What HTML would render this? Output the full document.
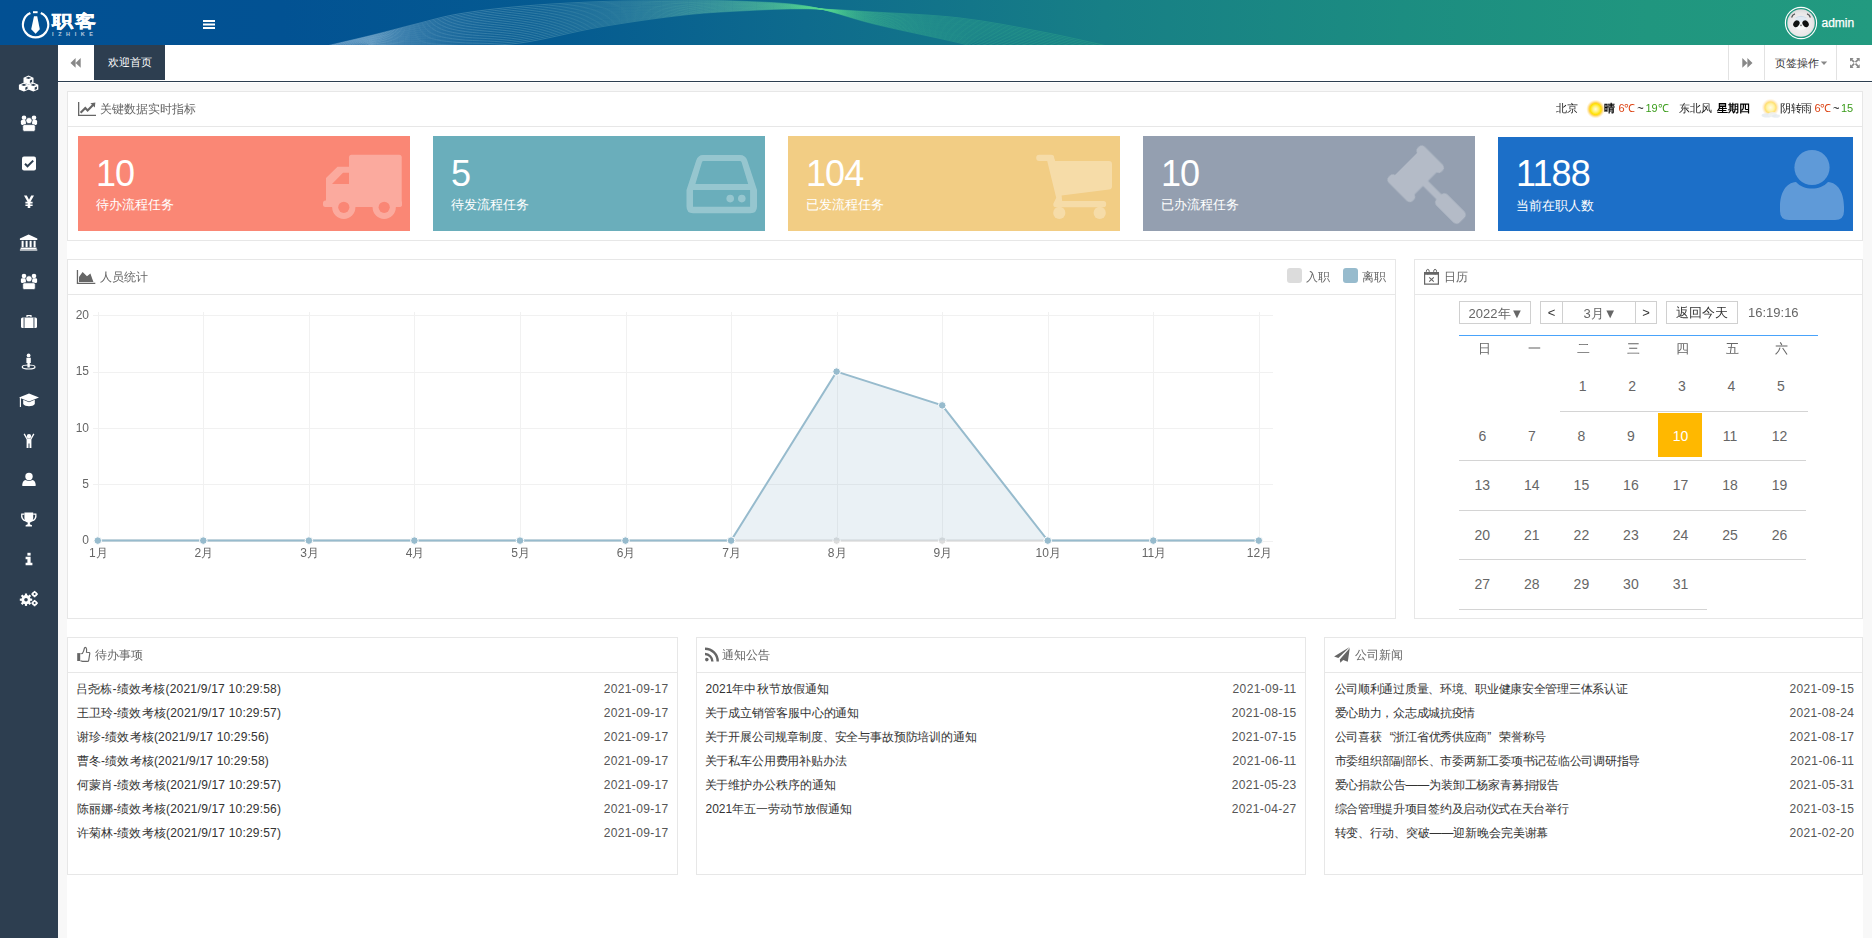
<!DOCTYPE html>
<html><head><meta charset="utf-8">
<style>
*{margin:0;padding:0;box-sizing:border-box}
html,body{width:1872px;height:938px;overflow:hidden}
body{position:relative;background:#f8f8f8;font-family:"Liberation Sans",sans-serif;font-size:12px;color:#333}
.abs{position:absolute}
#hdr{left:0;top:0;width:1872px;height:45px;background:linear-gradient(90deg,#025093 0%,#025293 15%,#055b91 30%,#0e6b8d 43%,#177f86 59%,#1c8d81 75%,#20967f 88%,#229a80 100%);overflow:hidden}
#side{left:0;top:45px;width:58px;height:893px;background:#2d3e50}
#tabbar{left:58px;top:45px;width:1814px;height:38px;background:#fff}
#tabline{left:58px;top:81px;width:1814px;height:1px;background:#2d3e50}
#wrap{left:67px;top:91px;width:1796px;height:847px;background:#fff}
.panel{position:absolute;background:#fff;border:1px solid #e7e7e7}
.ptitle{position:absolute;left:0;top:0;right:0;height:35px;border-bottom:1px solid #e7e7e7;color:#666;font-size:12px;line-height:35px}
.card{position:absolute;top:136px;height:95px;color:#fff}
.card .num{position:absolute;left:18px;top:18px;font-size:36px;line-height:40px;letter-spacing:-0.9px}
.card .lbl{position:absolute;left:18px;top:59px;font-size:13px;line-height:20px}
.card svg{position:absolute}
.li{position:absolute;left:9px;right:9px;height:24px;line-height:24px;font-size:12px;color:#333}
.li span{position:absolute;right:0;top:0;color:#555}
</style></head><body>
<div id="hdr" class="abs">
<svg width="1872" height="45" style="position:absolute;left:0;top:0">
<defs><linearGradient id="rg" gradientUnits="userSpaceOnUse" x1="320" y1="0" x2="1130" y2="0">
<stop offset="0" stop-color="#d8ecff" stop-opacity="0.45"/>
<stop offset="0.35" stop-color="#a8dcd0" stop-opacity="0.32"/>
<stop offset="0.6" stop-color="#55d890" stop-opacity="0.42"/>
<stop offset="1" stop-color="#40c888" stop-opacity="0.35"/>
</linearGradient></defs>
<g fill="none" stroke="url(#rg)" stroke-width="0.7">
<path d="M318.0,48.0 C327.2,45.8 356.7,39.0 373.0,35.0 C389.3,31.0 401.7,27.5 416.0,24.0 C430.3,20.5 441.7,16.8 459.0,13.9 C476.3,11.0 496.5,8.5 520.0,6.4 C543.5,4.3 573.3,2.6 600.0,1.6 C626.7,0.6 656.7,0.7 680.0,0.6 C703.3,0.5 718.7,0.2 740.0,1.2 C761.3,2.1 785.7,2.5 808.0,6.3 C830.3,10.1 848.7,17.9 874.0,24.0 C899.3,30.1 944.4,39.2 960.0,43.0 C975.6,46.8 965.0,45.3 967.5,46.5 C970.0,47.7 973.8,49.4 975.0,50.0"/>
<path d="M320.9,48.0 C329.5,45.9 357.1,39.3 373.0,35.5 C388.9,31.7 401.7,28.4 416.0,25.0 C430.3,21.7 441.7,18.2 459.0,15.4 C476.3,12.6 496.5,10.2 520.0,8.1 C543.5,6.0 573.3,3.9 600.0,2.8 C626.7,1.7 656.7,1.5 680.0,1.3 C703.3,1.1 718.7,0.8 740.0,1.7 C761.3,2.5 785.7,2.8 808.0,6.4 C830.3,10.0 848.7,17.5 874.0,23.4 C899.3,29.3 943.8,38.1 960.0,41.8 C976.2,45.5 967.4,44.4 971.1,45.8 C974.8,47.2 980.3,49.3 982.1,50.0"/>
<path d="M323.7,48.0 C331.9,46.0 357.6,39.7 373.0,36.0 C388.4,32.4 401.7,29.3 416.0,26.1 C430.3,22.9 441.7,19.6 459.0,16.9 C476.3,14.2 496.5,12.0 520.0,9.9 C543.5,7.7 573.3,5.3 600.0,4.0 C626.7,2.7 656.7,2.3 680.0,2.0 C703.3,1.7 718.7,1.4 740.0,2.1 C761.3,2.9 785.7,3.1 808.0,6.5 C830.3,10.0 848.7,17.2 874.0,22.9 C899.3,28.5 943.2,36.9 960.0,40.6 C976.8,44.3 969.8,43.6 974.6,45.1 C979.5,46.7 986.8,49.2 989.3,50.0"/>
<path d="M326.6,48.0 C334.3,46.1 358.1,40.0 373.0,36.6 C387.9,33.1 401.7,30.2 416.0,27.1 C430.3,24.1 441.7,21.0 459.0,18.4 C476.3,15.8 496.5,13.8 520.0,11.6 C543.5,9.4 573.3,6.7 600.0,5.2 C626.7,3.7 656.7,3.2 680.0,2.7 C703.3,2.3 718.7,1.9 740.0,2.6 C761.3,3.3 785.7,3.4 808.0,6.7 C830.3,9.9 848.7,16.8 874.0,22.3 C899.3,27.7 942.6,35.7 960.0,39.4 C977.4,43.1 972.1,42.7 978.2,44.4 C984.3,46.2 993.4,49.1 996.4,50.0"/>
<path d="M329.4,48.0 C336.7,46.2 358.6,40.4 373.0,37.1 C387.4,33.8 401.7,31.1 416.0,28.2 C430.3,25.3 441.7,22.4 459.0,19.9 C476.3,17.4 496.5,15.6 520.0,13.4 C543.5,11.1 573.3,8.1 600.0,6.4 C626.7,4.8 656.7,4.0 680.0,3.4 C703.3,2.9 718.7,2.5 740.0,3.1 C761.3,3.6 785.7,3.7 808.0,6.8 C830.3,9.9 848.7,16.5 874.0,21.7 C899.3,27.0 942.0,34.6 960.0,38.2 C978.0,41.9 974.5,41.8 981.8,43.7 C989.0,45.7 999.9,49.0 1003.6,50.0"/>
<path d="M332.3,48.0 C339.1,46.3 359.0,40.7 373.0,37.6 C387.0,34.5 401.7,31.9 416.0,29.2 C430.3,26.5 441.7,23.8 459.0,21.4 C476.3,19.1 496.5,17.4 520.0,15.1 C543.5,12.8 573.3,9.5 600.0,7.6 C626.7,5.8 656.7,4.8 680.0,4.1 C703.3,3.5 718.7,3.1 740.0,3.5 C761.3,4.0 785.7,4.0 808.0,6.9 C830.3,9.8 848.7,16.1 874.0,21.1 C899.3,26.2 941.4,33.4 960.0,37.0 C978.6,40.7 976.9,40.9 985.4,43.0 C993.8,45.2 1006.5,48.8 1010.7,50.0"/>
<path d="M335.1,48.0 C341.5,46.4 359.5,41.1 373.0,38.1 C386.5,35.2 401.7,32.8 416.0,30.3 C430.3,27.8 441.7,25.2 459.0,22.9 C476.3,20.7 496.5,19.2 520.0,16.9 C543.5,14.5 573.3,10.9 600.0,8.9 C626.7,6.9 656.7,5.7 680.0,4.9 C703.3,4.0 718.7,3.6 740.0,4.0 C761.3,4.4 785.7,4.3 808.0,7.0 C830.3,9.8 848.7,15.8 874.0,20.6 C899.3,25.4 940.8,32.2 960.0,35.9 C979.2,39.5 979.3,40.0 988.9,42.4 C998.6,44.7 1013.0,48.7 1017.9,50.0"/>
<path d="M338.0,48.0 C343.8,46.4 360.0,41.4 373.0,38.7 C386.0,35.9 401.7,33.7 416.0,31.3 C430.3,29.0 441.7,26.6 459.0,24.4 C476.3,22.3 496.5,21.0 520.0,18.6 C543.5,16.2 573.3,12.2 600.0,10.1 C626.7,7.9 656.7,6.5 680.0,5.6 C703.3,4.6 718.7,4.2 740.0,4.5 C761.3,4.7 785.7,4.5 808.0,7.1 C830.3,9.7 848.7,15.4 874.0,20.0 C899.3,24.6 940.2,31.1 960.0,34.7 C979.8,38.3 981.7,39.1 992.5,41.7 C1003.3,44.2 1019.6,48.6 1025.0,50.0"/>
<path d="M340.9,48.0 C346.2,46.5 360.5,41.8 373.0,39.2 C385.5,36.6 401.7,34.6 416.0,32.4 C430.3,30.2 441.7,27.9 459.0,25.9 C476.3,23.9 496.5,22.8 520.0,20.3 C543.5,17.9 573.3,13.6 600.0,11.3 C626.7,8.9 656.7,7.3 680.0,6.3 C703.3,5.2 718.7,4.8 740.0,4.9 C761.3,5.1 785.7,4.8 808.0,7.3 C830.3,9.7 848.7,15.1 874.0,19.4 C899.3,23.8 939.7,29.9 960.0,33.5 C980.3,37.1 984.0,38.2 996.1,41.0 C1008.1,43.7 1026.1,48.5 1032.1,50.0"/>
<path d="M343.7,48.0 C348.6,46.6 361.0,42.1 373.0,39.7 C385.0,37.3 401.7,35.5 416.0,33.4 C430.3,31.4 441.7,29.3 459.0,27.4 C476.3,25.6 496.5,24.6 520.0,22.1 C543.5,19.6 573.3,15.0 600.0,12.5 C626.7,10.0 656.7,8.2 680.0,7.0 C703.3,5.8 718.7,5.3 740.0,5.4 C761.3,5.5 785.7,5.1 808.0,7.4 C830.3,9.6 848.7,14.7 874.0,18.9 C899.3,23.0 939.1,28.7 960.0,32.3 C980.9,35.9 986.4,37.3 999.6,40.3 C1012.9,43.2 1032.7,48.4 1039.3,50.0"/>
<path d="M346.6,48.0 C351.0,46.7 361.4,42.5 373.0,40.2 C384.6,38.0 401.7,36.4 416.0,34.5 C430.3,32.6 441.7,30.7 459.0,28.9 C476.3,27.2 496.5,26.4 520.0,23.8 C543.5,21.3 573.3,16.4 600.0,13.7 C626.7,11.0 656.7,9.0 680.0,7.7 C703.3,6.4 718.7,5.9 740.0,5.9 C761.3,5.8 785.7,5.4 808.0,7.5 C830.3,9.6 848.7,14.4 874.0,18.3 C899.3,22.2 938.5,27.5 960.0,31.1 C981.5,34.6 988.8,36.4 1003.2,39.6 C1017.6,42.7 1039.2,48.3 1046.4,50.0"/>
<path d="M349.4,48.0 C353.4,46.8 361.9,42.8 373.0,40.8 C384.1,38.7 401.7,37.2 416.0,35.5 C430.3,33.8 441.7,32.1 459.0,30.5 C476.3,28.8 496.5,28.2 520.0,25.6 C543.5,23.0 573.3,17.8 600.0,14.9 C626.7,12.0 656.7,9.8 680.0,8.4 C703.3,7.0 718.7,6.5 740.0,6.3 C761.3,6.2 785.7,5.7 808.0,7.6 C830.3,9.5 848.7,14.0 874.0,17.7 C899.3,21.4 937.9,26.4 960.0,29.9 C982.1,33.4 991.2,35.6 1006.8,38.9 C1022.4,42.3 1045.8,48.2 1053.6,50.0"/>
<path d="M352.3,48.0 C355.7,46.9 362.4,43.2 373.0,41.3 C383.6,39.4 401.7,38.1 416.0,36.6 C430.3,35.0 441.7,33.5 459.0,32.0 C476.3,30.4 496.5,30.0 520.0,27.3 C543.5,24.7 573.3,19.1 600.0,16.1 C626.7,13.1 656.7,10.7 680.0,9.1 C703.3,7.6 718.7,7.0 740.0,6.8 C761.3,6.6 785.7,6.0 808.0,7.7 C830.3,9.5 848.7,13.6 874.0,17.1 C899.3,20.6 937.3,25.2 960.0,28.7 C982.7,32.2 993.6,34.7 1010.4,38.2 C1027.1,41.8 1052.3,48.0 1060.7,50.0"/>
<path d="M355.1,48.0 C358.1,47.0 362.9,43.5 373.0,41.8 C383.1,40.1 401.7,39.0 416.0,37.6 C430.3,36.2 441.7,34.9 459.0,33.5 C476.3,32.0 496.5,31.7 520.0,29.1 C543.5,26.4 573.3,20.5 600.0,17.3 C626.7,14.1 656.7,11.5 680.0,9.8 C703.3,8.1 718.7,7.6 740.0,7.3 C761.3,6.9 785.7,6.3 808.0,7.8 C830.3,9.4 848.7,13.3 874.0,16.6 C899.3,19.9 936.7,24.0 960.0,27.5 C983.3,31.0 996.0,33.8 1013.9,37.5 C1031.9,41.3 1058.9,47.9 1067.9,50.0"/>
<path d="M358.0,48.0 C360.5,47.1 363.3,43.9 373.0,42.3 C382.7,40.8 401.7,39.9 416.0,38.7 C430.3,37.4 441.7,36.3 459.0,35.0 C476.3,33.7 496.5,33.5 520.0,30.8 C543.5,28.1 573.3,21.9 600.0,18.5 C626.7,15.2 656.7,12.3 680.0,10.5 C703.3,8.7 718.7,8.2 740.0,7.7 C761.3,7.3 785.7,6.6 808.0,8.0 C830.3,9.3 848.7,12.9 874.0,16.0 C899.3,19.1 936.1,22.9 960.0,26.3 C983.9,29.8 998.3,32.9 1017.5,36.8 C1036.7,40.8 1065.4,47.8 1075.0,50.0"/>
<path d="M360.9,48.0 C362.9,47.1 363.8,44.2 373.0,42.9 C382.2,41.5 401.7,40.8 416.0,39.7 C430.3,38.6 441.7,37.7 459.0,36.5 C476.3,35.3 496.5,35.3 520.0,32.5 C543.5,29.8 573.3,23.3 600.0,19.7 C626.7,16.2 656.7,13.2 680.0,11.2 C703.3,9.3 718.7,8.7 740.0,8.2 C761.3,7.7 785.7,6.9 808.0,8.1 C830.3,9.3 848.7,12.6 874.0,15.4 C899.3,18.3 935.5,21.7 960.0,25.1 C984.5,28.6 1000.7,32.0 1021.1,36.1 C1041.4,40.3 1072.0,47.7 1082.1,50.0"/>
<path d="M363.7,48.0 C365.3,47.2 364.3,44.6 373.0,43.4 C381.7,42.2 401.7,41.7 416.0,40.8 C430.3,39.9 441.7,39.1 459.0,38.0 C476.3,36.9 496.5,37.1 520.0,34.3 C543.5,31.4 573.3,24.7 600.0,21.0 C626.7,17.2 656.7,14.0 680.0,12.0 C703.3,9.9 718.7,9.3 740.0,8.7 C761.3,8.0 785.7,7.2 808.0,8.2 C830.3,9.2 848.7,12.2 874.0,14.9 C899.3,17.5 934.9,20.5 960.0,24.0 C985.1,27.4 1003.1,31.1 1024.6,35.5 C1046.2,39.8 1078.5,47.6 1089.3,50.0"/>
<path d="M366.6,48.0 C367.6,47.3 364.8,44.9 373.0,43.9 C381.2,42.9 401.7,42.5 416.0,41.8 C430.3,41.1 441.7,40.4 459.0,39.5 C476.3,38.5 496.5,38.9 520.0,36.0 C543.5,33.1 573.3,26.1 600.0,22.2 C626.7,18.3 656.7,14.8 680.0,12.7 C703.3,10.5 718.7,9.9 740.0,9.1 C761.3,8.4 785.7,7.5 808.0,8.3 C830.3,9.2 848.7,11.9 874.0,14.3 C899.3,16.7 934.3,19.3 960.0,22.8 C985.7,26.2 1005.5,30.2 1028.2,34.8 C1051.0,39.3 1085.1,47.5 1096.4,50.0"/>
<path d="M369.4,48.0 C370.0,47.4 365.2,45.3 373.0,44.4 C380.8,43.6 401.7,43.4 416.0,42.9 C430.3,42.3 441.7,41.8 459.0,41.0 C476.3,40.1 496.5,40.7 520.0,37.8 C543.5,34.8 573.3,27.4 600.0,23.4 C626.7,19.3 656.7,15.7 680.0,13.4 C703.3,11.1 718.7,10.4 740.0,9.6 C761.3,8.8 785.7,7.8 808.0,8.4 C830.3,9.1 848.7,11.5 874.0,13.7 C899.3,15.9 933.7,18.2 960.0,21.6 C986.3,25.0 1007.9,29.3 1031.8,34.1 C1055.7,38.8 1091.6,47.3 1103.6,50.0"/>
<path d="M372.3,48.0 C372.4,47.5 365.7,45.6 373.0,45.0 C380.3,44.3 401.7,44.3 416.0,43.9 C430.3,43.5 441.7,43.2 459.0,42.5 C476.3,41.8 496.5,42.5 520.0,39.5 C543.5,36.5 573.3,28.8 600.0,24.6 C626.7,20.3 656.7,16.5 680.0,14.1 C703.3,11.7 718.7,11.0 740.0,10.1 C761.3,9.1 785.7,8.0 808.0,8.6 C830.3,9.1 848.7,11.2 874.0,13.1 C899.3,15.1 933.1,17.0 960.0,20.4 C986.9,23.8 1010.2,28.4 1035.4,33.4 C1060.5,38.3 1098.2,47.2 1110.7,50.0"/>
<path d="M375.1,48.0 C374.8,47.6 366.2,46.0 373.0,45.5 C379.8,45.0 401.7,45.2 416.0,45.0 C430.3,44.7 441.7,44.6 459.0,44.0 C476.3,43.4 496.5,44.3 520.0,41.3 C543.5,38.2 573.3,30.2 600.0,25.8 C626.7,21.4 656.7,17.3 680.0,14.8 C703.3,12.2 718.7,11.6 740.0,10.5 C761.3,9.5 785.7,8.3 808.0,8.7 C830.3,9.0 848.7,10.8 874.0,12.6 C899.3,14.3 932.5,15.8 960.0,19.2 C987.5,22.5 1012.6,27.6 1038.9,32.7 C1065.2,37.8 1104.7,47.1 1117.9,50.0"/>
<path d="M378.0,48.0 C377.2,47.7 366.7,46.3 373.0,46.0 C379.3,45.7 401.7,46.1 416.0,46.0 C430.3,45.9 441.7,46.0 459.0,45.5 C476.3,45.0 496.5,46.1 520.0,43.0 C543.5,39.9 573.3,31.6 600.0,27.0 C626.7,22.4 656.7,18.2 680.0,15.5 C703.3,12.8 718.7,12.1 740.0,11.0 C761.3,9.9 785.7,8.6 808.0,8.8 C830.3,9.0 848.7,10.5 874.0,12.0 C899.3,13.5 931.9,14.7 960.0,18.0 C988.1,21.3 1015.0,26.7 1042.5,32.0 C1070.0,37.3 1111.2,47.0 1125.0,50.0"/>
</g>
<!-- logo -->
<g fill="none" stroke="#fff" stroke-width="2.2">
<path d="M30.4,13.1 A12.7,12.7 0 1 0 40.8,13.1"/>
</g>
<rect x="33" y="11.2" width="4.6" height="2" fill="#fff"/>
<path d="M34,16.3 L37.2,16.3 L39.8,29.2 L35.6,33.8 L31.2,29.2 Z" fill="#fff"/>
<text transform="translate(51.5 27) scale(1.03 0.84)" fill="#fff" stroke="#fff" stroke-width="0.5" font-size="20" font-weight="bold" letter-spacing="2.4">职客</text>
<text x="52" y="36.2" fill="#fff" font-size="5.5" font-weight="bold" letter-spacing="4.6" opacity="0.7">IZHIKE</text>
<!-- hamburger -->
<rect x="203" y="20" width="12" height="2" fill="#fff"/>
<rect x="203" y="23.5" width="12" height="2" fill="#fff"/>
<rect x="203" y="27" width="12" height="2" fill="#fff"/>
<!-- avatar -->
<defs><radialGradient id="face" cx="0.5" cy="0.55" r="0.55"><stop offset="0" stop-color="#f6f6f6"/><stop offset="0.75" stop-color="#e9e7e8"/><stop offset="1" stop-color="#d9d9db"/></radialGradient></defs>
<circle cx="1801" cy="23" r="15.6" fill="none" stroke="#fff" stroke-width="1.1"/>
<circle cx="1801" cy="23" r="13.7" fill="url(#face)"/>
<path d="M1794.5,18.2 Q1801,13.2 1807.5,18.2 Q1801,16.4 1794.5,18.2 Z" fill="#c9daea"/>
<ellipse cx="1801" cy="19.5" rx="6.2" ry="2.2" fill="#dfe9f2"/>
<path d="M1791.6,17.5 Q1792.4,14.6 1795,13.9" fill="none" stroke="#555" stroke-width="1.3"/>
<path d="M1810.4,17.5 Q1809.6,14.6 1807,13.9" fill="none" stroke="#555" stroke-width="1.3"/>
<ellipse cx="1801" cy="26.5" rx="6" ry="3.2" fill="#f8f8f8"/>
<ellipse cx="1796.4" cy="23.7" rx="2.9" ry="3.6" fill="#111" transform="rotate(35 1796.4 23.7)"/>
<ellipse cx="1805.6" cy="23.7" rx="2.9" ry="3.6" fill="#111" transform="rotate(-35 1805.6 23.7)"/>
<circle cx="1801" cy="25.3" r="0.9" fill="#777"/>
<text x="1821.5" y="27" fill="#fff" font-size="12" stroke="#fff" stroke-width="0.25">admin</text>
</svg>
</div>
<div id="side" class="abs"></div>
<svg class="abs" style="left:0;top:0" width="58" height="938">
<g fill="#fff">
<!-- cubes center (28.6,83.5) -->
<path d="M28.5,75.6 L33.5,77.8 L33.5,82.4 L28.5,84.6 L23.5,82.4 L23.5,77.8 Z"/><path fill="#2d3e50" d="M28.5,76.7 L31.3,77.9 L28.5,79.1 L25.7,77.9 Z"/><path fill="#2d3e50" d="M29.9,80.5 L32.1,79.5 L32.1,82.0 L29.9,83.0 Z"/><path d="M23.9,82.6 L28.9,84.8 L28.9,89.4 L23.9,91.6 L18.9,89.4 L18.9,84.8 Z"/><path fill="#2d3e50" d="M23.9,83.7 L26.7,84.9 L23.9,86.1 L21.1,84.9 Z"/><path fill="#2d3e50" d="M25.3,87.5 L27.5,86.5 L27.5,89.0 L25.3,90.0 Z"/><path d="M33.3,82.6 L38.3,84.8 L38.3,89.4 L33.3,91.6 L28.3,89.4 L28.3,84.8 Z"/><path fill="#2d3e50" d="M33.3,83.7 L36.1,84.9 L33.3,86.1 L30.5,84.9 Z"/><path fill="#2d3e50" d="M34.7,87.5 L36.9,86.5 L36.9,89.0 L34.7,90.0 Z"/>
<!-- users (29,123.4) -->
<g transform="translate(0 0.0)"><circle cx="24" cy="117.8" r="2.3"/><circle cx="34" cy="117.8" r="2.3"/><rect x="20.9" y="120" width="5" height="4.9" rx="1.3"/><rect x="32.1" y="120" width="5" height="4.9" rx="1.3"/><circle cx="29" cy="120.6" r="3.1" stroke="#2d3e50" stroke-width="0.7"/><rect x="22.7" y="124.6" width="12.6" height="6.8" rx="1.6" stroke="#2d3e50" stroke-width="0.7"/></g>
<!-- check-square (29,163.6) -->
<g transform="translate(29 163.6)">
<path d="M-7,-5 Q-7,-7 -5,-7 L5,-7 Q7,-7 7,-5 L7,5 Q7,7 5,7 L-5,7 Q-7,7 -7,5 Z"/>
<path d="M-4,0.2 L-1.5,2.7 L4.2,-3" fill="none" stroke="#2d3e50" stroke-width="2"/>
</g>
<!-- yen (29,201.8) -->
<g transform="translate(29 201.8)">
<path d="M-5,-6.2 L-2.2,-6.2 L0,-2 L2.2,-6.2 L5,-6.2 L1.5,0 L3.6,0 L3.6,1.6 L1.3,1.6 L1.3,2.6 L3.6,2.6 L3.6,4.2 L1.3,4.2 L1.3,6.2 L-1.3,6.2 L-1.3,4.2 L-3.6,4.2 L-3.6,2.6 L-1.3,2.6 L-1.3,1.6 L-3.6,1.6 L-3.6,0 L-1.5,0 Z"/>
</g>
<!-- bank (28.6,242.6) -->
<g transform="translate(28.6 242.6)">
<path d="M-8.7,-4 L0,-8 L8.7,-4 L8.7,-2.6 L-8.7,-2.6 Z"/>
<rect x="-7" y="-1.8" width="2" height="6.4"/><rect x="-3" y="-1.8" width="2" height="6.4"/><rect x="1" y="-1.8" width="2" height="6.4"/><rect x="5" y="-1.8" width="2" height="6.4"/>
<rect x="-8" y="5" width="16" height="1.6"/><rect x="-8.7" y="6.8" width="17.4" height="1.2"/>
</g>
<!-- users (29,281.6) -->
<g transform="translate(0 158.2)"><circle cx="24" cy="117.8" r="2.3"/><circle cx="34" cy="117.8" r="2.3"/><rect x="20.9" y="120" width="5" height="4.9" rx="1.3"/><rect x="32.1" y="120" width="5" height="4.9" rx="1.3"/><circle cx="29" cy="120.6" r="3.1" stroke="#2d3e50" stroke-width="0.7"/><rect x="22.7" y="124.6" width="12.6" height="6.8" rx="1.6" stroke="#2d3e50" stroke-width="0.7"/></g>
<!-- briefcase (29,321.5) -->
<g transform="translate(29 321.5)">
<path d="M-2.6,-4.4 L-2.6,-6.4 L2.6,-6.4 L2.6,-4.4 L1.4,-4.4 L1.4,-5.2 L-1.4,-5.2 L-1.4,-4.4 Z"/>
<rect x="-8" y="-4" width="16" height="10.4" rx="1.5"/>
<rect x="-5.4" y="-4" width="0.9" height="10.4" fill="#2d3e50"/><rect x="4.5" y="-4" width="0.9" height="10.4" fill="#2d3e50"/>
</g>
<!-- street view (28.6,361.4) -->
<g transform="translate(28.6 361.4)">
<circle cx="0" cy="-6" r="1.9"/>
<path d="M-2.2,-3.6 L2.2,-3.6 L2.2,1.6 L1.2,1.6 L1.2,6 L-1.2,6 L-1.2,1.6 L-2.2,1.6 Z"/>
<ellipse cx="0" cy="5.6" rx="6.4" ry="2" fill="none" stroke="#fff" stroke-width="1.2"/>
</g>
<!-- grad cap (29,400.4) -->
<g transform="translate(29 400.4)">
<path d="M-10,-3 L0,-7 L10,-3 L0,1 Z"/>
<path d="M-5.8,-0.6 L-5.8,3.6 C-4,6.6 4,6.6 5.8,3.6 L5.8,-0.6 L0,1.8 Z"/>
<path d="M-8.6,-2.4 L-8.6,6.6" stroke="#fff" stroke-width="1.1"/>
</g>
<!-- child (29,441) -->
<g transform="translate(29 441)">
<circle cx="0" cy="-4.8" r="2.2"/>
<path d="M-5.4,-6.8 L-4.2,-7.4 L-1.6,-2.6 L1.6,-2.6 L4.2,-7.4 L5.4,-6.8 L2.4,-1.4 L2.4,7 L0.5,7 L0.5,2.6 L-0.5,2.6 L-0.5,7 L-2.4,7 L-2.4,-1.4 Z"/>
</g>
<!-- user (29,479.4) -->
<g transform="translate(29 479.4)">
<circle cx="0" cy="-3" r="3.7"/>
<path d="M-6.5,6.6 L6.5,6.6 C7,6.6 7,1.6 3.6,0.6 C2.5,1.6 -2.5,1.6 -3.6,0.6 C-7,1.6 -7,6.6 -6.5,6.6 Z"/>
</g>
<!-- trophy (28.8,519.5) -->
<g transform="translate(28.8 519.5)">
<path d="M-4.4,-7 L4.4,-7 L4.4,-1.6 C4.4,1.6 2.2,3 1.1,3 L1.1,4.6 C1.1,5.2 3.2,5.4 3.2,6 L3.2,7 L-3.2,7 L-3.2,6 C-3.2,5.4 -1.1,5.2 -1.1,4.6 L-1.1,3 C-2.2,3 -4.4,1.6 -4.4,-1.6 Z"/>
<path d="M-4.4,-5.4 L-7,-5.4 C-7.6,-2 -6,1 -3,1.4" fill="none" stroke="#fff" stroke-width="1.3"/>
<path d="M4.4,-5.4 L7,-5.4 C7.6,-2 6,1 3,1.4" fill="none" stroke="#fff" stroke-width="1.3"/>
</g>
<!-- info (29,559) -->
<g transform="translate(29 559)">
<rect x="-1.6" y="-6.2" width="3.2" height="2.8"/>
<path d="M-3.4,-2.2 L1.6,-2.2 L1.6,3.8 L3.4,3.8 L3.4,6.2 L-3.4,6.2 L-3.4,3.8 L-1.6,3.8 L-1.6,0.2 L-3.4,0.2 Z"/>
</g>
<!-- cogs (29.2,598.5) -->
<g transform="translate(29.2 598.5)">
<circle cx="-3.2" cy="1.2" r="4.6"/>
<g stroke="#fff" stroke-width="2.2"><path d="M-3.2,-5 L-3.2,7.4"/><path d="M-9.4,1.2 L3,1.2"/><path d="M-7.6,-3.2 L1.2,5.6"/><path d="M-7.6,5.6 L1.2,-3.2"/></g>
<circle cx="-3.2" cy="1.2" r="1.8" fill="#2d3e50"/>
<circle cx="5.4" cy="-4.4" r="2.7"/><circle cx="5.4" cy="4.6" r="2.7"/>
<g stroke="#fff" stroke-width="1.5"><path d="M5.4,-7.6 L5.4,-1.2"/><path d="M2.2,-4.4 L8.6,-4.4"/><path d="M5.4,1.4 L5.4,7.8"/><path d="M2.2,4.6 L8.6,4.6"/></g>
<circle cx="5.4" cy="-4.4" r="1" fill="#2d3e50"/><circle cx="5.4" cy="4.6" r="1" fill="#2d3e50"/>
</g>
</g></svg>
<div id="tabbar" class="abs"></div>
<svg class="abs" style="left:0;top:0" width="1872" height="90">
<path d="M70.5,62.9 L75.6,58 L75.6,67.7 Z M75.6,62.9 L80.7,58 L80.7,67.7 Z" fill="#888"/>
<rect x="94" y="45" width="71" height="35" fill="#2d3e50"/>
<rect x="1728" y="45" width="1" height="35" fill="#e2e2e2"/>
<rect x="1764" y="45" width="1" height="35" fill="#e2e2e2"/>
<rect x="1836" y="45" width="1" height="35" fill="#e2e2e2"/>
<path d="M1752.5,62.9 L1747.4,58 L1747.4,67.7 Z M1747.4,62.9 L1742.3,58 L1742.3,67.7 Z" fill="#888"/>
<path d="M1820.8,61.4 L1827.2,61.4 L1824,65 Z" fill="#888"/>
<g fill="#888">
<path d="M1850,58 L1853.6,58 L1852.4,59.2 L1854.8,61.6 L1853.6,62.8 L1851.2,60.4 L1850,61.6 Z"/>
<path d="M1859.7,58 L1856.1,58 L1857.3,59.2 L1854.9,61.6 L1856.1,62.8 L1858.5,60.4 L1859.7,61.6 Z"/>
<path d="M1850,67.9 L1853.6,67.9 L1852.4,66.7 L1854.8,64.3 L1853.6,63.1 L1851.2,65.5 L1850,64.3 Z"/>
<path d="M1859.7,67.9 L1856.1,67.9 L1857.3,66.7 L1854.9,64.3 L1856.1,63.1 L1858.5,65.5 L1859.7,64.3 Z"/>
</g>
</svg>
<div class="abs" style="left:94.5px;top:53px;width:71px;text-align:center;color:#fff;font-size:11.4px;line-height:18px">欢迎首页</div>
<div class="abs" style="left:1775px;top:54px;color:#333;font-size:11px;line-height:18px">页签操作</div>
<div id="tabline" class="abs"></div>
<div id="wrap" class="abs"></div>

<!-- panel 1 -->
<div class="panel" style="left:67px;top:91px;width:1796px;height:150px">
  <div class="ptitle"></div>
</div>
<div class="card" style="left:78px;width:332px;background:#fa8775"><div class="num">10</div><div class="lbl">待办流程任务</div></div>
<div class="card" style="left:433px;width:332px;background:#6aaebb"><div class="num">5</div><div class="lbl">待发流程任务</div></div>
<div class="card" style="left:788px;width:332px;background:#f2cd84"><div class="num">104</div><div class="lbl">已发流程任务</div></div>
<div class="card" style="left:1143px;width:332px;background:#949fb0"><div class="num">10</div><div class="lbl">已办流程任务</div></div>
<div class="card" style="left:1498px;width:355px;top:137px;height:94px;background:#1c6fc8"><div class="num" style="top:17px">1188</div><div class="lbl">当前在职人数</div></div>


<!-- card icons -->
<svg class="abs" style="left:0;top:0" width="1872" height="240">
<g fill="#fff" opacity="0.3">
<!-- truck -->
<g>
<rect x="349" y="154.8" width="52.7" height="52" rx="2.5"/>
<path d="M326,178 L337.5,166.7 L351,166.7 L351,207 L326,207 Z M332,184 L343,172.7 L349.4,172.7 L349.4,184 Z" fill-rule="evenodd"/>
<rect x="323" y="200.5" width="79" height="6.5" rx="2.5"/>
<circle cx="343.8" cy="207.3" r="11.6"/><circle cx="384.2" cy="207.3" r="11.6"/>
<circle cx="343.8" cy="207.3" r="5.6" fill="#fa8775"/><circle cx="384.2" cy="207.3" r="5.6" fill="#fa8775"/>
</g>
<!-- hdd -->
<path fill-rule="evenodd" d="M703,155 L740,155 Q745.5,155 747.3,160.5 L757,190 L757,206.5 Q757,213.2 750.5,213.2 L693,213.2 Q686.5,213.2 686.5,206.5 L686.5,190 L696.2,160.5 Q698,155 703,155 Z M703.5,160.9 L740,160.9 Q741,160.9 741.5,162 L748.2,184 L695.4,184 L702,162 Q702.5,160.9 703.5,160.9 Z M693,189.9 L750.1,189.9 L750.1,206.7 L693,206.7 Z"/>
<circle cx="730.2" cy="198.6" r="3.8"/><circle cx="741.8" cy="198.6" r="3.8"/>
<!-- cart -->
<rect x="1036.2" y="154.8" width="18" height="6.2" rx="3"/>
<path d="M1046.6,158.5 L1054.5,158.5 L1055.2,161.1 L1109,161.1 Q1112,161.1 1112,164.2 L1112,186.5 Q1112,189.2 1109.2,189.6 L1061.6,195.4 L1062.2,200.9 L1103.5,200.9 Q1106.2,200.9 1106.2,204 Q1106.2,207.2 1103.5,207.2 L1056,207.2 Q1052.6,207.2 1053.4,203.6 L1056.2,197.8 Z"/>
<circle cx="1059.3" cy="212.9" r="6.1"/><circle cx="1099.7" cy="212.9" r="6.1"/>
<!-- gavel -->
<g transform="translate(1415.75 173.7) scale(1.042) rotate(-45)">
<rect x="14.9" y="-16.3" width="9.5" height="32.3" rx="4"/>
<rect x="-24.5" y="-16.2" width="9.7" height="32.5" rx="4"/>
<rect x="-15.5" y="-13.2" width="31" height="26.5"/>
<rect x="-3.4" y="12" width="6.8" height="21"/>
<rect x="-7.6" y="31.4" width="15" height="31.5" rx="4.5"/>
</g>
<!-- user -->
<circle cx="1812" cy="167.5" r="17.6"/>
<path d="M1780,207 C1780,193 1786,182.5 1796,182 C1800,186.5 1806,188.6 1812,188.6 C1818,188.6 1824,186.5 1828,182 C1838,182.5 1844,193 1844,207 L1844,211 Q1844,220 1835,220 L1789,220 Q1780,220 1780,211 Z"/>
</g>
</svg>
<!-- panel 2 -->
<div class="panel" style="left:67px;top:259px;width:1329px;height:360px">
  <div class="ptitle"></div>
</div>
<!-- panel 3 -->
<div class="panel" style="left:1414px;top:259px;width:449px;height:360px">
  <div class="ptitle"></div>
</div>
<!-- bottom panels -->
<div class="panel" style="left:67px;top:637px;width:611px;height:238px"><div class="ptitle"></div></div>
<div class="panel" style="left:696px;top:637px;width:610px;height:238px"><div class="ptitle"></div></div>
<div class="panel" style="left:1324px;top:637px;width:539px;height:238px"><div class="ptitle"></div></div>

<svg class="abs" style="left:0;top:0" width="1400" height="620">
<g stroke="#f1f1f1" stroke-width="1" fill="none">
<path d="M93,541.5 L1273,541.5"/>
<path d="M93,484.5 L1273,484.5"/>
<path d="M93,428.5 L1273,428.5"/>
<path d="M93,372.5 L1273,372.5"/>
<path d="M93,315.5 L1273,315.5"/>
<path d="M98.5,312 L98.5,545"/>
<path d="M203.5,312 L203.5,545"/>
<path d="M309.5,312 L309.5,545"/>
<path d="M414.5,312 L414.5,545"/>
<path d="M520.5,312 L520.5,545"/>
<path d="M626.5,312 L626.5,545"/>
<path d="M731.5,312 L731.5,545"/>
<path d="M837.5,312 L837.5,545"/>
<path d="M942.5,312 L942.5,545"/>
<path d="M1048.5,312 L1048.5,545"/>
<path d="M1153.5,312 L1153.5,545"/>
<path d="M1259.5,312 L1259.5,545"/>
</g>
<g fill="#666" font-size="12" text-anchor="end">
<text x="89" y="544.2">0</text>
<text x="89" y="487.9">5</text>
<text x="89" y="431.6">10</text>
<text x="89" y="375.2">15</text>
<text x="89" y="318.9">20</text>
</g>
<g fill="#666" font-size="12" text-anchor="middle">
<text x="98.4" y="556.5">1月</text>
<text x="203.9" y="556.5">2月</text>
<text x="309.5" y="556.5">3月</text>
<text x="415.1" y="556.5">4月</text>
<text x="520.6" y="556.5">5月</text>
<text x="626.1" y="556.5">6月</text>
<text x="731.7" y="556.5">7月</text>
<text x="837.2" y="556.5">8月</text>
<text x="942.8" y="556.5">9月</text>
<text x="1048.3" y="556.5">10月</text>
<text x="1153.9" y="556.5">11月</text>
<text x="1259.4" y="556.5">12月</text>
</g>
<polyline points="97.8,540.6 203.3,540.6 308.9,540.6 414.4,540.6 520.0,540.6 625.5,540.6 731.1,540.6 836.6,540.6 942.2,540.6 1047.8,540.6 1153.3,540.6 1258.8,540.6" fill="none" stroke="#dcdcdc" stroke-width="2"/>
<circle cx="97.8" cy="540.6" r="3.8" fill="#dcdcdc" stroke="#fff" stroke-width="1"/>
<circle cx="203.3" cy="540.6" r="3.8" fill="#dcdcdc" stroke="#fff" stroke-width="1"/>
<circle cx="308.9" cy="540.6" r="3.8" fill="#dcdcdc" stroke="#fff" stroke-width="1"/>
<circle cx="414.4" cy="540.6" r="3.8" fill="#dcdcdc" stroke="#fff" stroke-width="1"/>
<circle cx="520.0" cy="540.6" r="3.8" fill="#dcdcdc" stroke="#fff" stroke-width="1"/>
<circle cx="625.5" cy="540.6" r="3.8" fill="#dcdcdc" stroke="#fff" stroke-width="1"/>
<circle cx="731.1" cy="540.6" r="3.8" fill="#dcdcdc" stroke="#fff" stroke-width="1"/>
<circle cx="836.6" cy="540.6" r="3.8" fill="#dcdcdc" stroke="#fff" stroke-width="1"/>
<circle cx="942.2" cy="540.6" r="3.8" fill="#dcdcdc" stroke="#fff" stroke-width="1"/>
<circle cx="1047.8" cy="540.6" r="3.8" fill="#dcdcdc" stroke="#fff" stroke-width="1"/>
<circle cx="1153.3" cy="540.6" r="3.8" fill="#dcdcdc" stroke="#fff" stroke-width="1"/>
<circle cx="1258.8" cy="540.6" r="3.8" fill="#dcdcdc" stroke="#fff" stroke-width="1"/>
<polygon points="97.8,540.6 203.3,540.6 308.9,540.6 414.4,540.6 520.0,540.6 625.5,540.6 731.1,540.6 836.6,371.6 942.2,405.4 1047.8,540.6 1153.3,540.6 1258.8,540.6 1258.8,540.6 97.8,540.6" fill="rgba(151,187,205,0.2)"/>
<polyline points="97.8,540.6 203.3,540.6 308.9,540.6 414.4,540.6 520.0,540.6 625.5,540.6 731.1,540.6 836.6,371.6 942.2,405.4 1047.8,540.6 1153.3,540.6 1258.8,540.6" fill="none" stroke="#97bbcd" stroke-width="2"/>
<circle cx="97.8" cy="540.6" r="3.8" fill="#97bbcd" stroke="#fff" stroke-width="1"/>
<circle cx="203.3" cy="540.6" r="3.8" fill="#97bbcd" stroke="#fff" stroke-width="1"/>
<circle cx="308.9" cy="540.6" r="3.8" fill="#97bbcd" stroke="#fff" stroke-width="1"/>
<circle cx="414.4" cy="540.6" r="3.8" fill="#97bbcd" stroke="#fff" stroke-width="1"/>
<circle cx="520.0" cy="540.6" r="3.8" fill="#97bbcd" stroke="#fff" stroke-width="1"/>
<circle cx="625.5" cy="540.6" r="3.8" fill="#97bbcd" stroke="#fff" stroke-width="1"/>
<circle cx="731.1" cy="540.6" r="3.8" fill="#97bbcd" stroke="#fff" stroke-width="1"/>
<circle cx="836.6" cy="371.6" r="3.8" fill="#97bbcd" stroke="#fff" stroke-width="1"/>
<circle cx="942.2" cy="405.4" r="3.8" fill="#97bbcd" stroke="#fff" stroke-width="1"/>
<circle cx="1047.8" cy="540.6" r="3.8" fill="#97bbcd" stroke="#fff" stroke-width="1"/>
<circle cx="1153.3" cy="540.6" r="3.8" fill="#97bbcd" stroke="#fff" stroke-width="1"/>
<circle cx="1258.8" cy="540.6" r="3.8" fill="#97bbcd" stroke="#fff" stroke-width="1"/>
<rect x="1287" y="268" width="15" height="15" rx="3" fill="#dcdcdc"/>
<rect x="1343" y="268" width="15" height="15" rx="3" fill="#97bbcd"/>
</svg>
<div class="abs" style="left:1306px;top:267.8px;color:#666;font-size:12px;line-height:18px">入职</div>
<div class="abs" style="left:1362px;top:267.8px;color:#666;font-size:12px;line-height:18px">离职</div>
<div class="abs" style="left:1459px;top:301px;width:72px;height:23px;border:1px solid #d0d0d0"></div><div class="abs" style="left:1460px;top:302.7px;width:72px;color:#666;font-size:13px;line-height:21px;text-align:center">2022年▼</div>
<div class="abs" style="left:1540px;top:301px;width:117px;height:23px;border:1px solid #d0d0d0"></div>
<div class="abs" style="left:1562px;top:301px;width:1px;height:23px;background:#d0d0d0"></div>
<div class="abs" style="left:1635px;top:301px;width:1px;height:23px;background:#d0d0d0"></div>
<div class="abs" style="left:1541px;top:302px;width:21px;color:#333;font-size:13px;line-height:21px;text-align:center">&lt;</div>
<div class="abs" style="left:1564px;top:302.7px;width:72px;color:#666;font-size:13px;line-height:21px;text-align:center">3月▼</div>
<div class="abs" style="left:1636px;top:302px;width:20px;color:#333;font-size:13px;line-height:21px;text-align:center">&gt;</div>
<div class="abs" style="left:1666px;top:301px;width:72px;height:23px;border:1px solid #d0d0d0;color:#333;font-size:13px;line-height:21px;text-align:center">返回今天</div>
<div class="abs" style="left:1748px;top:302px;color:#666;font-size:13px;line-height:21px">16:19:16</div>
<div class="abs" style="left:1459px;top:335px;width:359px;height:1px;background:#49a3fb"></div>
<div class="abs" style="left:1464.5px;top:340px;width:40px;color:#666;font-size:13px;line-height:18px;text-align:center">日</div>
<div class="abs" style="left:1514.0px;top:340px;width:40px;color:#666;font-size:13px;line-height:18px;text-align:center">一</div>
<div class="abs" style="left:1563.6px;top:340px;width:40px;color:#666;font-size:13px;line-height:18px;text-align:center">二</div>
<div class="abs" style="left:1613.2px;top:340px;width:40px;color:#666;font-size:13px;line-height:18px;text-align:center">三</div>
<div class="abs" style="left:1662.7px;top:340px;width:40px;color:#666;font-size:13px;line-height:18px;text-align:center">四</div>
<div class="abs" style="left:1712.2px;top:340px;width:40px;color:#666;font-size:13px;line-height:18px;text-align:center">五</div>
<div class="abs" style="left:1761.8px;top:340px;width:40px;color:#666;font-size:13px;line-height:18px;text-align:center">六</div>
<div class="abs" style="left:1658px;top:413px;width:44px;height:44px;background:#ffb800"></div>
<div class="abs" style="left:1559.8px;top:411px;width:247.8px;height:1px;background:#d4d4d4"></div>
<div class="abs" style="left:1562.7px;top:375.8px;width:40px;color:#666;font-size:14px;line-height:20px;text-align:center">1</div>
<div class="abs" style="left:1612.2px;top:375.8px;width:40px;color:#666;font-size:14px;line-height:20px;text-align:center">2</div>
<div class="abs" style="left:1661.8px;top:375.8px;width:40px;color:#666;font-size:14px;line-height:20px;text-align:center">3</div>
<div class="abs" style="left:1711.3px;top:375.8px;width:40px;color:#666;font-size:14px;line-height:20px;text-align:center">4</div>
<div class="abs" style="left:1760.9px;top:375.8px;width:40px;color:#666;font-size:14px;line-height:20px;text-align:center">5</div>
<div class="abs" style="left:1459.4px;top:460px;width:346.8px;height:1px;background:#d4d4d4"></div>
<div class="abs" style="left:1462.3px;top:426.4px;width:40px;color:#666;font-size:14px;line-height:20px;text-align:center">6</div>
<div class="abs" style="left:1511.8px;top:426.4px;width:40px;color:#666;font-size:14px;line-height:20px;text-align:center">7</div>
<div class="abs" style="left:1561.4px;top:426.4px;width:40px;color:#666;font-size:14px;line-height:20px;text-align:center">8</div>
<div class="abs" style="left:1610.9px;top:426.4px;width:40px;color:#666;font-size:14px;line-height:20px;text-align:center">9</div>
<div class="abs" style="left:1660.5px;top:426.4px;width:40px;color:#fff;font-size:14px;line-height:20px;text-align:center">10</div>
<div class="abs" style="left:1710.0px;top:426.4px;width:40px;color:#666;font-size:14px;line-height:20px;text-align:center">11</div>
<div class="abs" style="left:1759.6px;top:426.4px;width:40px;color:#666;font-size:14px;line-height:20px;text-align:center">12</div>
<div class="abs" style="left:1459.4px;top:510px;width:346.8px;height:1px;background:#d4d4d4"></div>
<div class="abs" style="left:1462.3px;top:475.3px;width:40px;color:#666;font-size:14px;line-height:20px;text-align:center">13</div>
<div class="abs" style="left:1511.8px;top:475.3px;width:40px;color:#666;font-size:14px;line-height:20px;text-align:center">14</div>
<div class="abs" style="left:1561.4px;top:475.3px;width:40px;color:#666;font-size:14px;line-height:20px;text-align:center">15</div>
<div class="abs" style="left:1610.9px;top:475.3px;width:40px;color:#666;font-size:14px;line-height:20px;text-align:center">16</div>
<div class="abs" style="left:1660.5px;top:475.3px;width:40px;color:#666;font-size:14px;line-height:20px;text-align:center">17</div>
<div class="abs" style="left:1710.0px;top:475.3px;width:40px;color:#666;font-size:14px;line-height:20px;text-align:center">18</div>
<div class="abs" style="left:1759.6px;top:475.3px;width:40px;color:#666;font-size:14px;line-height:20px;text-align:center">19</div>
<div class="abs" style="left:1459.4px;top:559px;width:346.8px;height:1px;background:#d4d4d4"></div>
<div class="abs" style="left:1462.3px;top:525.1px;width:40px;color:#666;font-size:14px;line-height:20px;text-align:center">20</div>
<div class="abs" style="left:1511.8px;top:525.1px;width:40px;color:#666;font-size:14px;line-height:20px;text-align:center">21</div>
<div class="abs" style="left:1561.4px;top:525.1px;width:40px;color:#666;font-size:14px;line-height:20px;text-align:center">22</div>
<div class="abs" style="left:1610.9px;top:525.1px;width:40px;color:#666;font-size:14px;line-height:20px;text-align:center">23</div>
<div class="abs" style="left:1660.5px;top:525.1px;width:40px;color:#666;font-size:14px;line-height:20px;text-align:center">24</div>
<div class="abs" style="left:1710.0px;top:525.1px;width:40px;color:#666;font-size:14px;line-height:20px;text-align:center">25</div>
<div class="abs" style="left:1759.6px;top:525.1px;width:40px;color:#666;font-size:14px;line-height:20px;text-align:center">26</div>
<div class="abs" style="left:1459.4px;top:609px;width:247.8px;height:1px;background:#d4d4d4"></div>
<div class="abs" style="left:1462.3px;top:574.0px;width:40px;color:#666;font-size:14px;line-height:20px;text-align:center">27</div>
<div class="abs" style="left:1511.8px;top:574.0px;width:40px;color:#666;font-size:14px;line-height:20px;text-align:center">28</div>
<div class="abs" style="left:1561.4px;top:574.0px;width:40px;color:#666;font-size:14px;line-height:20px;text-align:center">29</div>
<div class="abs" style="left:1610.9px;top:574.0px;width:40px;color:#666;font-size:14px;line-height:20px;text-align:center">30</div>
<div class="abs" style="left:1660.5px;top:574.0px;width:40px;color:#666;font-size:14px;line-height:20px;text-align:center">31</div>
<div class="abs" style="left:75.8px;top:678.8px;color:#333;font-size:12px;line-height:20px;white-space:nowrap;letter-spacing:0.211px">吕尧栋-绩效考核(2021/9/17 10:29:58)</div>
<div class="abs" style="left:568.6px;top:678.8px;width:100px;color:#555;font-size:12px;line-height:20px;text-align:right;white-space:nowrap;letter-spacing:0.35px">2021-09-17</div>
<div class="abs" style="left:76.6px;top:702.8px;color:#333;font-size:12px;line-height:20px;white-space:nowrap;letter-spacing:0.181px">王卫玲-绩效考核(2021/9/17 10:29:57)</div>
<div class="abs" style="left:568.6px;top:702.8px;width:100px;color:#555;font-size:12px;line-height:20px;text-align:right;white-space:nowrap;letter-spacing:0.35px">2021-09-17</div>
<div class="abs" style="left:76.6px;top:726.8px;color:#333;font-size:12px;line-height:20px;white-space:nowrap;letter-spacing:0.185px">谢珍-绩效考核(2021/9/17 10:29:56)</div>
<div class="abs" style="left:568.6px;top:726.8px;width:100px;color:#555;font-size:12px;line-height:20px;text-align:right;white-space:nowrap;letter-spacing:0.35px">2021-09-17</div>
<div class="abs" style="left:76.6px;top:750.8px;color:#333;font-size:12px;line-height:20px;white-space:nowrap;letter-spacing:0.185px">曹冬-绩效考核(2021/9/17 10:29:58)</div>
<div class="abs" style="left:568.6px;top:750.8px;width:100px;color:#555;font-size:12px;line-height:20px;text-align:right;white-space:nowrap;letter-spacing:0.35px">2021-09-17</div>
<div class="abs" style="left:76.6px;top:774.8px;color:#333;font-size:12px;line-height:20px;white-space:nowrap;letter-spacing:0.181px">何蒙肖-绩效考核(2021/9/17 10:29:57)</div>
<div class="abs" style="left:568.6px;top:774.8px;width:100px;color:#555;font-size:12px;line-height:20px;text-align:right;white-space:nowrap;letter-spacing:0.35px">2021-09-17</div>
<div class="abs" style="left:76.6px;top:798.8px;color:#333;font-size:12px;line-height:20px;white-space:nowrap;letter-spacing:0.181px">陈丽娜-绩效考核(2021/9/17 10:29:56)</div>
<div class="abs" style="left:568.6px;top:798.8px;width:100px;color:#555;font-size:12px;line-height:20px;text-align:right;white-space:nowrap;letter-spacing:0.35px">2021-09-17</div>
<div class="abs" style="left:76.6px;top:822.8px;color:#333;font-size:12px;line-height:20px;white-space:nowrap;letter-spacing:0.181px">许菊林-绩效考核(2021/9/17 10:29:57)</div>
<div class="abs" style="left:568.6px;top:822.8px;width:100px;color:#555;font-size:12px;line-height:20px;text-align:right;white-space:nowrap;letter-spacing:0.35px">2021-09-17</div>
<div class="abs" style="left:705.5px;top:678.8px;color:#333;font-size:12px;line-height:20px;white-space:nowrap;letter-spacing:0.055px">2021年中秋节放假通知</div>
<div class="abs" style="left:1196.6px;top:678.8px;width:100px;color:#555;font-size:12px;line-height:20px;text-align:right;white-space:nowrap;letter-spacing:0.35px">2021-09-11</div>
<div class="abs" style="left:704.5px;top:702.8px;color:#333;font-size:12px;line-height:20px;white-space:nowrap;letter-spacing:-0.100px">关于成立销管客服中心的通知</div>
<div class="abs" style="left:1196.6px;top:702.8px;width:100px;color:#555;font-size:12px;line-height:20px;text-align:right;white-space:nowrap;letter-spacing:0.35px">2021-08-15</div>
<div class="abs" style="left:704.5px;top:726.8px;color:#333;font-size:12px;line-height:20px;white-space:nowrap;letter-spacing:-0.173px">关于开展公司规章制度、安全与事故预防培训的通知</div>
<div class="abs" style="left:1196.6px;top:726.8px;width:100px;color:#555;font-size:12px;line-height:20px;text-align:right;white-space:nowrap;letter-spacing:0.35px">2021-07-15</div>
<div class="abs" style="left:704.5px;top:750.8px;color:#333;font-size:12px;line-height:20px;white-space:nowrap;letter-spacing:-0.164px">关于私车公用费用补贴办法</div>
<div class="abs" style="left:1196.6px;top:750.8px;width:100px;color:#555;font-size:12px;line-height:20px;text-align:right;white-space:nowrap;letter-spacing:0.35px">2021-06-11</div>
<div class="abs" style="left:704.5px;top:774.8px;color:#333;font-size:12px;line-height:20px;white-space:nowrap;letter-spacing:-0.100px">关于维护办公秩序的通知</div>
<div class="abs" style="left:1196.6px;top:774.8px;width:100px;color:#555;font-size:12px;line-height:20px;text-align:right;white-space:nowrap;letter-spacing:0.35px">2021-05-23</div>
<div class="abs" style="left:705.5px;top:798.8px;color:#333;font-size:12px;line-height:20px;white-space:nowrap;letter-spacing:0.008px">2021年五一劳动节放假通知</div>
<div class="abs" style="left:1196.6px;top:798.8px;width:100px;color:#555;font-size:12px;line-height:20px;text-align:right;white-space:nowrap;letter-spacing:0.35px">2021-04-27</div>
<div class="abs" style="left:1334.6px;top:678.8px;color:#333;font-size:12px;line-height:20px;white-space:nowrap;letter-spacing:-0.288px">公司顺利通过质量、环境、职业健康安全管理三体系认证</div>
<div class="abs" style="left:1754.3px;top:678.8px;width:100px;color:#555;font-size:12px;line-height:20px;text-align:right;white-space:nowrap;letter-spacing:0.35px">2021-09-15</div>
<div class="abs" style="left:1334.6px;top:702.8px;color:#333;font-size:12px;line-height:20px;white-space:nowrap;letter-spacing:-0.291px">爱心助力，众志成城抗疫情</div>
<div class="abs" style="left:1754.3px;top:702.8px;width:100px;color:#555;font-size:12px;line-height:20px;text-align:right;white-space:nowrap;letter-spacing:0.35px">2021-08-24</div>
<div class="abs" style="left:1334.6px;top:726.8px;color:#333;font-size:12px;line-height:20px;white-space:nowrap;letter-spacing:-0.288px">公司喜获<span style="display:inline-block;width:12px;text-align:right">“</span>浙江省优秀供应商<span style="display:inline-block;width:12px;text-align:left">”</span>荣誉称号</div>
<div class="abs" style="left:1754.3px;top:726.8px;width:100px;color:#555;font-size:12px;line-height:20px;text-align:right;white-space:nowrap;letter-spacing:0.35px">2021-08-17</div>
<div class="abs" style="left:1334.6px;top:750.8px;color:#333;font-size:12px;line-height:20px;white-space:nowrap;letter-spacing:-0.248px">市委组织部副部长、市委两新工委项书记莅临公司调研指导</div>
<div class="abs" style="left:1754.3px;top:750.8px;width:100px;color:#555;font-size:12px;line-height:20px;text-align:right;white-space:nowrap;letter-spacing:0.35px">2021-06-11</div>
<div class="abs" style="left:1334.6px;top:774.8px;color:#333;font-size:12px;line-height:20px;white-space:nowrap;letter-spacing:-0.189px">爱心捐款公告——为装卸工杨家青募捐报告</div>
<div class="abs" style="left:1754.3px;top:774.8px;width:100px;color:#555;font-size:12px;line-height:20px;text-align:right;white-space:nowrap;letter-spacing:0.35px">2021-05-31</div>
<div class="abs" style="left:1334.6px;top:798.8px;color:#333;font-size:12px;line-height:20px;white-space:nowrap;letter-spacing:-0.305px">综合管理提升项目签约及启动仪式在天台举行</div>
<div class="abs" style="left:1754.3px;top:798.8px;width:100px;color:#555;font-size:12px;line-height:20px;text-align:right;white-space:nowrap;letter-spacing:0.35px">2021-03-15</div>
<div class="abs" style="left:1334.6px;top:822.8px;color:#333;font-size:12px;line-height:20px;white-space:nowrap;letter-spacing:-0.124px">转变、行动、突破——迎新晚会完美谢幕</div>
<div class="abs" style="left:1754.3px;top:822.8px;width:100px;color:#555;font-size:12px;line-height:20px;text-align:right;white-space:nowrap;letter-spacing:0.35px">2021-02-20</div>
<!-- titles -->
<svg class="abs" style="left:0;top:0" width="1872" height="700">
<g fill="#666" stroke="none">
<!-- line chart icon -->
<path d="M78,102 L79.3,102 L79.3,114.7 L96,114.7 L96,116 L78,116 Z"/>
<path d="M80.6,112.8 L85.3,108 L87.6,110.4 L93,105" fill="none" stroke="#666" stroke-width="2.1"/><path d="M90.4,103.2 L95.4,102.6 L94.8,107.6 Z"/>
<!-- area chart icon -->
<path d="M76.8,270 L78.1,270 L78.1,282.7 L95.3,282.7 L95.3,284 L76.8,284 Z"/>
<path d="M79,282 L79,277 L82.6,272 L87,276.2 L90.4,273.6 L93.4,282 Z"/>
<!-- calendar-times-o -->
<path fill-rule="evenodd" d="M1424,271.9 L1439,271.9 L1439,284.8 L1424,284.8 Z M1425.2,274.8 L1437.8,274.8 L1437.8,283.6 L1425.2,283.6 Z"/>
<ellipse cx="1427.8" cy="271.7" rx="1.45" ry="2.4" fill="none" stroke="#666" stroke-width="1"/>
<ellipse cx="1435.1" cy="271.7" rx="1.45" ry="2.4" fill="none" stroke="#666" stroke-width="1"/>
<path d="M1429.2,277.4 L1433.8,281.7 M1433.8,277.4 L1429.2,281.7" stroke="#666" stroke-width="1.1"/>
<!-- thumbs-o-up -->
<rect x="77.2" y="653.1" width="3" height="7.9" fill="#666"/>
<path d="M80.4,653.8 L82.4,653.5 Q83.9,651.2 84.4,648.2 Q84.9,647 86,647.7 Q87,648.7 86.5,652.3 L89.1,652.5 Q90.1,652.7 89.7,654.1 L88.7,660.3 Q88.5,661.4 87.3,661.4 L82.6,661.4 L80.4,660.7" fill="none" stroke="#666" stroke-width="1.15"/>
<!-- rss -->
<circle cx="706.8" cy="659.6" r="1.8"/>
<path d="M705,652.8 A8.8,8.8 0 0 1 713.6,661.4 L711.2,661.4 A6.4,6.4 0 0 0 705,655.2 Z"/>
<path d="M705,647.5 A13.9,13.9 0 0 1 718.9,661.4 L716.5,661.4 A11.5,11.5 0 0 0 705,649.9 Z"/>
<!-- paper plane -->
<path d="M1334.1,656.4 L1349.7,647.1 L1338.4,658 Z"/><path d="M1339.8,659.4 L1349.8,648 L1347.8,661.8 L1343.2,660 L1340.3,662.8 Z"/>
</g>
</svg>
<div class="abs" style="left:100px;top:100px;color:#666;font-size:12px;line-height:18px">关键数据实时指标</div>
<div class="abs" style="left:99.5px;top:268px;color:#666;font-size:12px;line-height:18px">人员统计</div>
<div class="abs" style="left:1444px;top:268px;color:#666;font-size:12px;line-height:18px">日历</div>
<div class="abs" style="left:95px;top:645.9px;color:#666;font-size:12px;line-height:18px">待办事项</div>
<div class="abs" style="left:722px;top:645.9px;color:#666;font-size:12px;line-height:18px">通知公告</div>
<div class="abs" style="left:1355px;top:645.9px;color:#666;font-size:12px;line-height:18px">公司新闻</div>
<!-- weather -->
<div class="abs" style="left:1556px;top:100px;color:#1a1a1a;font-size:11px;line-height:16px;white-space:nowrap">北京</div>
<svg class="abs" style="left:1585px;top:99px" width="22" height="20"><defs><radialGradient id="sun" cx="0.5" cy="0.5" r="0.5"><stop offset="0" stop-color="#fffce0"/><stop offset="0.3" stop-color="#fff27a"/><stop offset="0.58" stop-color="#ffe000"/><stop offset="0.7" stop-color="#ffc830" stop-opacity="0.8"/><stop offset="1" stop-color="#ffe0a0" stop-opacity="0"/></radialGradient></defs><circle cx="10.6" cy="10.1" r="9.5" fill="url(#sun)"/></svg>
<div class="abs" style="left:1604px;top:100px;color:#000;font-size:11px;line-height:16px;font-weight:bold">晴</div>
<div class="abs" style="left:1618.4px;top:100px;font-size:11px;line-height:16px;white-space:nowrap;letter-spacing:-0.1px;word-spacing:-1px"><span style="color:#dc4010">6℃</span> <span style="color:#000">~</span> <span style="color:#3a9c1a">19℃</span></div>
<div class="abs" style="left:1679px;top:100px;color:#1a1a1a;font-size:11px;line-height:16px;white-space:nowrap">东北风</div>
<div class="abs" style="left:1717px;top:100px;color:#000;font-size:11px;line-height:16px;font-weight:bold;white-space:nowrap">星期四</div>
<svg class="abs" style="left:1759px;top:98px" width="24" height="22"><defs><radialGradient id="sun2" cx="0.5" cy="0.5" r="0.5"><stop offset="0" stop-color="#fffbe8"/><stop offset="0.4" stop-color="#fff3a8"/><stop offset="0.62" stop-color="#ffe070"/><stop offset="0.75" stop-color="#ffd890" stop-opacity="0.6"/><stop offset="1" stop-color="#ffe8c0" stop-opacity="0"/></radialGradient></defs><circle cx="11.5" cy="9.5" r="9" fill="url(#sun2)"/><ellipse cx="8" cy="17.4" rx="5.5" ry="2.2" fill="#e4eaee" opacity="0.85"/><ellipse cx="13.5" cy="16.6" rx="4.2" ry="2.6" fill="#edf1f4" opacity="0.85"/><ellipse cx="17" cy="18" rx="4" ry="1.8" fill="#e4eaee" opacity="0.8"/></svg>
<div class="abs" style="left:1780px;top:100px;color:#1a1a1a;font-size:11px;line-height:16px;white-space:nowrap;letter-spacing:-0.5px">阴转雨</div>
<div class="abs" style="left:1814.6px;top:100px;width:38.6px;overflow:hidden;font-size:11px;line-height:16px;white-space:nowrap;letter-spacing:-0.25px;word-spacing:-1px"><span style="color:#dc4010">6℃</span> <span style="color:#000">~</span> <span style="color:#3a9c1a">15℃</span></div>
</body></html>
